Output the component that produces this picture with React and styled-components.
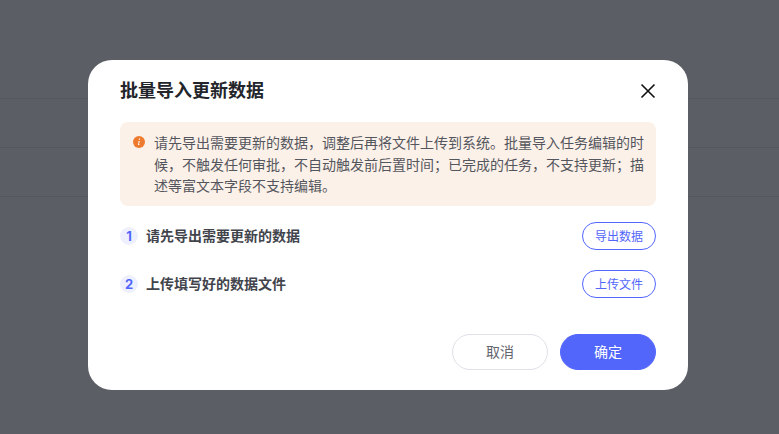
import styled, { createGlobalStyle } from "styled-components"

const Global = createGlobalStyle`
  html, body {
    margin: 0;
    padding: 0;
    height: 100%;
    background: #5c5e66;
    overflow: hidden;
    font-family: "Inter", "Noto Sans CJK SC", sans-serif;
  }
`

const Page = styled.div`
  position: relative;
  width: 779px;
  height: 434px;
  background: #5c5e66;
  overflow: hidden;
`

const BackRow = styled.div`
  height: ${props => props.$h}px;
  border-bottom: 1px solid #55575e;
`

const Overlay = styled.div`
  position: absolute;
  inset: 0;
  padding: 60px 0 0 88px;
  box-sizing: border-box;
`

const Modal = styled.div`
  width: 600px;
  height: 330px;
  background: #fff;
  border-radius: 24px;
  padding: 20px 32px 20px;
  box-sizing: border-box;
  display: flex;
  flex-direction: column;
`

const Header = styled.div`
  display: flex;
  align-items: center;
  justify-content: space-between;
  height: 22px;
  margin-bottom: 20px;
`

const Title = styled.div`
  font-size: 18px;
  line-height: 22px;
  font-weight: 600;
  color: #23252b;
`

const Close = styled.button`
  border: 0;
  background: none;
  padding: 0;
  width: 16px;
  height: 16px;
  display: flex;
  color: #111;
`

const Alert = styled.div`
  display: flex;
  background: #fcf1e8;
  border-radius: 8px;
  padding: 10px 8px 8px 13px;
  height: 84px;
  box-sizing: border-box;
  gap: 9px;
  margin-bottom: 16px;
`

const AlertIcon = styled.svg`
  width: 12px;
  height: 12px;
  flex: none;
  margin-top: 4px;
`

const AlertText = styled.div`
  flex: none;
  font-size: 14px;
  line-height: 21.5px;
  color: #54565e;
  width: 492px;
`

const Step = styled.div`
  display: flex;
  align-items: center;
  height: 28px;
  margin-bottom: 20px;
`

const StepNum = styled.span`
  width: 18px;
  height: 18px;
  border-radius: 50%;
  background: #eef0fe;
  color: #5266fb;
  font-size: 13px;
  font-weight: 700;
  display: flex;
  align-items: center;
  justify-content: center;
  margin-right: 8px;
`

const StepLabel = styled.span`
  flex: 1;
  font-size: 14px;
  font-weight: 600;
  color: #42444c;
  padding-bottom: 2px;
`

const OutlineButton = styled.button`
  width: 74px;
  height: 28px;
  border: 1px solid #5266fb;
  border-radius: 14px;
  background: #fff;
  color: #5266fb;
  font-family: inherit;
  font-size: 12px;
  padding: 0 0 2px;
`

const Footer = styled.div`
  margin-top: auto;
  display: flex;
  justify-content: flex-end;
  gap: 12px;
`

const FooterButton = styled.button`
  width: 96px;
  height: 36px;
  border-radius: 18px;
  border: 1px solid ${props => (props.$primary ? "#5266fb" : "#dfe0e8")};
  background: ${props => (props.$primary ? "#5266fb" : "#fff")};
  color: ${props => (props.$primary ? "#fff" : "#62646c")};
  font-family: inherit;
  font-size: 14px;
  padding: 0 0 2px;
`

export default function App() {
  return (
    <Page>
      <Global />
      <BackRow $h={98} />
      <BackRow $h={48} />
      <BackRow $h={48} />
      <Overlay>
        <Modal>
          <Header>
            <Title>批量导入更新数据</Title>
            <Close aria-label="关闭">
              <svg width="16" height="16" viewBox="0 0 16 16" fill="none">
                <path d="M1.5 1.5l13 13M14.5 1.5l-13 13" stroke="currentColor" strokeWidth="1.6" />
              </svg>
            </Close>
          </Header>
          <Alert>
            <AlertIcon viewBox="0 0 12 12">
              <circle cx="6" cy="6" r="6" fill="#ee7a2f" />
              <path d="M6.1 2.6h1.1l-.3 1.2H5.8zM5.6 5h1.2l-.8 3.2h.6l-.2.8H4.9l.8-3.2h-.5z" fill="#fff" />
            </AlertIcon>
            <AlertText>
              请先导出需要更新的数据，调整后再将文件上传到系统。批量导入任务编辑的时候，不触发任何审批，不自动触发前后置时间；已完成的任务，不支持更新；描述等富文本字段不支持编辑。
            </AlertText>
          </Alert>
          <Step>
            <StepNum>1</StepNum>
            <StepLabel>请先导出需要更新的数据</StepLabel>
            <OutlineButton>导出数据</OutlineButton>
          </Step>
          <Step>
            <StepNum>2</StepNum>
            <StepLabel>上传填写好的数据文件</StepLabel>
            <OutlineButton>上传文件</OutlineButton>
          </Step>
          <Footer>
            <FooterButton>取消</FooterButton>
            <FooterButton $primary>确定</FooterButton>
          </Footer>
        </Modal>
      </Overlay>
    </Page>
  )
}
